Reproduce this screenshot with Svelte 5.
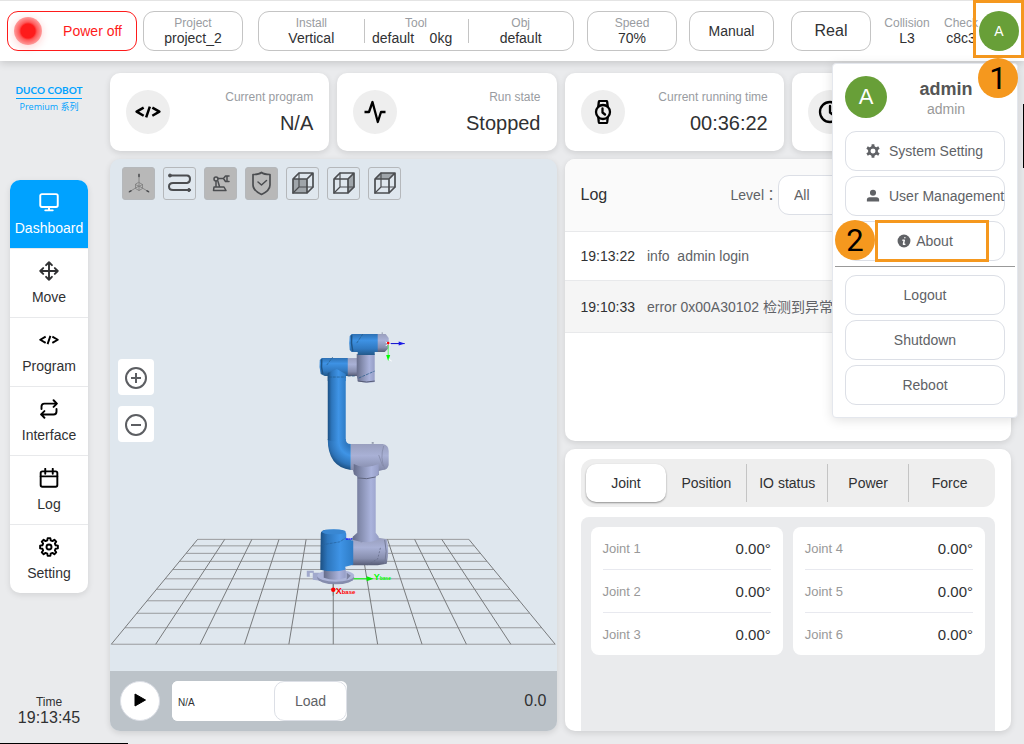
<script>
  const cards = [
    { icon: 'code', label: 'Current program', value: 'N/A' },
    { icon: 'pulse', label: 'Run state', value: 'Stopped' },
    { icon: 'watch', label: 'Current running time', value: '00:36:22' },
    { icon: 'clock', label: '', value: '' }
  ];
  const nav = [
    { icon: 'monitor', label: 'Dashboard' },
    { icon: 'move', label: 'Move' },
    { icon: 'code', label: 'Program' },
    { icon: 'repeat', label: 'Interface' },
    { icon: 'calendar', label: 'Log' },
    { icon: 'gear', label: 'Setting' }
  ];
  const tools = [
    { icon: 'axes', label: 'Axes', on: true },
    { icon: 'path', label: 'Path', on: false },
    { icon: 'arm', label: 'Model', on: true },
    { icon: 'shield', label: 'Safety', on: true },
    { icon: 'front', label: 'Front view', on: false },
    { icon: 'side', label: 'Side view', on: false },
    { icon: 'top', label: 'Top view', on: false }
  ];
  const tabs = ['Joint', 'Position', 'IO status', 'Power', 'Force'];
  const joints = [
    ['Joint 1', 'Joint 2', 'Joint 3'],
    ['Joint 4', 'Joint 5', 'Joint 6']
  ];
  let activeTab = $state('Joint');

  // Floor grid in perspective
  const far = { y: 539.5, l: 197.7, r: 469.3 };
  const near = { y: 644.5, l: 111.3, r: 555.7 };
  const rows = [539.5, 546, 553.5, 561.5, 569.7, 579, 589.5, 601, 613.5, 628, 644.5].map((y) => {
    const t = (y - far.y) / (near.y - far.y);
    return { y, l: far.l + (near.l - far.l) * t, r: far.r + (near.r - far.r) * t };
  });
  const cols = Array.from({ length: 11 }, (_, i) => ({
    a: far.l + ((far.r - far.l) * i) / 10,
    b: near.l + ((near.r - near.l) * i) / 10
  }));

  function gear(n, outer, inner) {
    const pts = [];
    const step = (Math.PI * 2) / n;
    for (let i = 0; i < n; i++) {
      for (const [f, r] of [[-0.32, inner], [-0.19, outer], [0.19, outer], [0.32, inner]]) {
        const a = i * step + f * step - Math.PI / 2;
        pts.push((12 + r * Math.cos(a)).toFixed(2) + ' ' + (12 + r * Math.sin(a)).toFixed(2));
      }
    }
    return 'M' + pts.join('L') + 'Z';
  }
</script>

{#snippet glyph(name, size)}
  <svg width={size} height={size} viewBox="0 0 24 24" fill="none" stroke="currentColor" stroke-width="2.300" stroke-linecap="round" stroke-linejoin="round" aria-hidden="true">
    {#if name === 'code'}
      <path d="M8 8L1.5 11.7L8 15.5M16 8l6.500 3.700L16 15.500M13.700 7L10.300 17" stroke-linecap="butt" />
    {:else if name === 'pulse'}
      <path d="M1.500 12H6L9.500 2L14.800 22L18 12h4.500" stroke-linecap="butt" />
    {:else if name === 'watch'}
      <circle cx="12" cy="12" r="7" /><path d="M7.300 6.500L7.800 2Q8 .8 9.200.8h5.600Q16 .8 16.200 2l.5 4.500M7.300 17.500L7.800 22Q8 23.200 9.200 23.200h5.600q1.200 0 1.400-1.200l.5-4.500M11.500 8.500V12.500L14 14.500" />
    {:else if name === 'clock'}
      <circle cx="12" cy="12" r="10" /><path d="M12 6v6.500l4 3" />
    {:else if name === 'monitor'}
      <rect x="1.500" y="2.500" width="21" height="15.500" rx="2" /><path d="M12 18v4M7.500 22h9" />
    {:else if name === 'move'}
      <path d="M12 1.500v21M1.500 12h21M8.500 5L12 1.500l3.500 3.500M8.500 19L12 22.500l3.500-3.500M5 8.500L1.500 12l3.500 3.500M19 8.500L22.500 12l-3.500 3.500" />
    {:else if name === 'repeat'}
      <path d="M17.500 1.500l4 4l-4 4M3 12V9q0-3.500 3.500-3.500h15M6.500 22.500l-4-4l4-4M21 12v3q0 3.500-3.500 3.500h-15" />
    {:else if name === 'calendar'}
      <rect x="2" y="4" width="20" height="18.500" rx="2" /><path d="M2 10h20M7.500 1v6M16.500 1v6" />
    {:else if name === 'gear'}
      <path d={gear(8, 10.8, 8.2)} /><circle cx="12" cy="12" r="3" />
    {:else if name === 'gearsolid'}
      <path fill-rule="evenodd" fill="currentColor" stroke="none" d={gear(6, 12, 8) + 'M12 7.500a4.500 4.500 0 1 0 .01 0z'} />
      <circle cx="12" cy="12" r="6.500" stroke-width="3.500" />
    {:else if name === 'user'}
      <g fill="currentColor" stroke="none"><circle cx="12" cy="6.500" r="5.200" /><path d="M1.500 21.500V18.500Q1.500 14 6 14h12q4.500 0 4.500 4.500v3z" /></g>
    {:else if name === 'info'}
      <circle cx="12" cy="12" r="11" fill="currentColor" stroke="none" /><path d="M13.500 6.200v.1M10 10.500h2.500L11 17.500h2.500" stroke="#fff" stroke-width="2.500" />
    {/if}
  </svg>
{/snippet}

{#snippet toolIcon(name)}
  <svg width="31" height="31" viewBox="0 0 31 31" fill="none" stroke="#4b4d50" stroke-width="2" stroke-linecap="round" stroke-linejoin="round" aria-hidden="true">
    {#if name === 'axes'}
      <g stroke="#7c7c7c" stroke-width=".8"><path d="M16 6v12L6 24M16 18l10 6" /><path d="M16 14.500l3.500 2v4L16 22.500l-3.500-2v-4zM12.500 16.500l3.500 2l3.500-2M16 18.500v4" /></g>
      <path d="M16 6.500v2M6.500 23.700l1.500-.9M25.500 23.700l-1.500-.9" stroke-width="1.500" />
    {:else if name === 'path'}
      <path d="M6 7.500h17q3 0 3 3.500t-3 4H9q-4 0-4 3.500t4 3.500h15" /><circle cx="6" cy="7.500" r="1.500" fill="#4b4d50" stroke-width="1" /><circle cx="25" cy="22" r="1.500" fill="#4b4d50" stroke-width="1" />
    {:else if name === 'arm'}
      <path d="M9 19h10l2 3.500H8.500zM11 18.500V13.500M14.500 18.500l-1.500-5M13 10.500h5" stroke-width="1.500" /><circle cx="11" cy="11" r="2" stroke-width="1.500" /><path d="M24 8h-3.500L18.500 10.500L20.500 13.500H24M22 8v5.500" stroke-width="1.500" />
    {:else if name === 'shield'}
      <path d="M15.500 4.500Q18 6.500 24 6.500V17q0 5.500-8.500 9.500Q7 22.500 7 17V6.500Q13 6.500 15.500 4.500z" stroke-width="1.700" /><path d="M12 14l3.500 3l5-4.500" stroke-width="1.500" />
    {:else}
      {#if name === 'front'}<path d="M6 11h14v14H6z" fill="#9fa5aa" stroke="none" />{/if}
      {#if name === 'side'}<path d="M20 11l6-6v14l-6 6z" fill="#9fa5aa" stroke="none" />{/if}
      {#if name === 'top'}<path d="M6 11l6-6h14l-6 6z" fill="#9fa5aa" stroke="none" />{/if}
      <path d="M6 11h14v14H6zM6 11l6-6h14l-6 6M26 5v14l-6 6" stroke-width="1.700" /><path d="M12 5v14h14M12 19l-6 6" stroke-width="1.200" />
    {/if}
  </svg>
{/snippet}

<div class="page">
  <header class="topbar">
    <button class="pill power"><span class="lamp"></span><span>Power off</span></button>
    <div class="pill project stat"><small>Project</small><b>project_2</b></div>
    <div class="pill group">
      <div class="stat"><small>Install</small><b>Vertical</b></div>
      <div class="stat"><small>Tool</small><b>default&nbsp;&nbsp;&nbsp;&nbsp;0kg&nbsp;&nbsp;</b></div>
      <div class="stat"><small>Obj</small><b>default</b></div>
    </div>
    <div class="pill speed stat"><small>Speed</small><b>70%</b></div>
    <button class="pill manual">Manual</button>
    <button class="pill real">Real</button>
    <div class="stat collision"><small>Collision</small><b>L3</b></div>
    <div class="stat check"><small>Check</small><b>c8c3</b></div>
    <button class="avatar" aria-label="Account">A</button>
    <span class="frame frame-one"></span>

    <div class="menu">
      <div class="who">
        <span class="avatar large">A</span>
        <div class="names"><strong>admin</strong><span>admin</span></div>
      </div>
      <button class="item lead">{@render glyph('gearsolid', 14)}System Setting</button>
      <button class="item lead">{@render glyph('user', 14)}User Management</button>
      <button class="item about">{@render glyph('info', 14)}About</button>
      <hr />
      <button class="item">Logout</button>
      <button class="item">Shutdown</button>
      <button class="item">Reboot</button>
      <span class="frame frame-two"></span>
      <span class="marker marker-one">1</span>
      <span class="marker marker-two">2</span>
    </div>
  </header>

  <div class="body">
    <aside>
      <div class="brand"><span class="brand-name">DUCO COBOT</span><span class="brand-sub">Premium 系列</span></div>
      <nav>
        {#each nav as item, i}
          <a href={'#' + item.label.toLowerCase()} class:current={i === 0} class:soft={item.icon === 'move'}>
            {@render glyph(item.icon, 20)}<span>{item.label}</span>
          </a>
        {/each}
      </nav>
      <div class="time"><span>Time</span><b>19:13:45</b></div>
    </aside>

    <main>
      {#each cards as card}
        <section class="card metric">
          <span class="disc">{@render glyph(card.icon, card.icon === 'code' ? 26 : 24)}</span>
          <div><span>{card.label}</span><b>{card.value}</b></div>
        </section>
      {/each}

      <section class="card viewer">
        <div class="scene">
          <svg class="canvas" viewBox="110 159 447 512" preserveAspectRatio="xMidYMid meet" role="img" aria-label="Robot model">
            <defs>
              <linearGradient id="blueV"><stop offset="0" stop-color="#1c4f82" /><stop offset=".22" stop-color="#2d76bd" /><stop offset=".6" stop-color="#3f94e6" /><stop offset="1" stop-color="#2e7cc6" /></linearGradient>
              <linearGradient id="blueH" x2="0" y2="1"><stop offset="0" stop-color="#2d71b4" /><stop offset=".3" stop-color="#3e92e4" /><stop offset=".7" stop-color="#3079c1" /><stop offset="1" stop-color="#235989" /></linearGradient>
              <linearGradient id="greyV"><stop offset="0" stop-color="#666d8b" /><stop offset=".3" stop-color="#858daf" /><stop offset=".7" stop-color="#aab3dc" /><stop offset="1" stop-color="#969ec6" /></linearGradient>
              <linearGradient id="greyH" x2="0" y2="1"><stop offset="0" stop-color="#999fbe" /><stop offset=".35" stop-color="#a9b1d6" /><stop offset=".75" stop-color="#878eae" /><stop offset="1" stop-color="#565c75" /></linearGradient>
              <radialGradient id="bend" gradientUnits="userSpaceOnUse" cx="354" cy="441" r="30"><stop offset=".25" stop-color="#3078c0" /><stop offset=".5" stop-color="#3f94e6" /><stop offset=".8" stop-color="#2d73b8" /><stop offset="1" stop-color="#194a79" /></radialGradient>
            </defs>

            <g stroke-width="1">
              {#each rows as r}<line x1={r.l} y1={r.y} x2={r.r} y2={r.y} stroke="#999b9d" />{/each}
              {#each cols as c}<line x1={c.a} y1={far.y} x2={c.b} y2={near.y} stroke="#77797b" />{/each}
            </g>

            <!-- base ring and clamp -->
            <path d="M307 571h7v2h6l1 8l-8-1v-3h-6z" fill="#a1a9cc" />
            <path d="M310 573h3v4h-3z" fill="#dfe7ee" />
            <ellipse cx="336" cy="578" rx="18.500" ry="6.500" fill="#858cad" />
            <ellipse cx="336" cy="576" rx="18.500" ry="6" fill="#adb5d9" />
            <path d="M324 568h22v10q-11 4-22 0z" fill="url(#greyV)" />
            <path d="M347 573l4 3l-4 4z" fill="#7b82a1" />
            <!-- lower joint -->
            <path d="M352 538h27l8 1.500q3 11 0 24.500l-9 1.500H352z" fill="url(#greyH)" />
            <path d="M385 540q3 11 0 24" stroke="#747b98" fill="none" />
            <path d="M321 534Q321 531 326 530h14q6 1 6.500 4v5l7 2v24l-8 2v3q-12 3-25 0z" fill="url(#blueV)" />
            <ellipse cx="334" cy="532" rx="12" ry="2.500" fill="#3987d2" />
            <path d="M322 545l18-3l6-4" stroke="#25619b" stroke-dasharray="3 1" fill="none" stroke-width=".7" />
            <path d="M368 565l10-6l3-12M361 542l16-3" stroke="#626984" stroke-dasharray="2 1.500" fill="none" stroke-width=".7" />
            <!-- forearm column -->
            <path d="M357.500 475h18.500v58l3 4v3q-13 5-26 0v-3l4.500-4z" fill="url(#greyV)" />
            <!-- shoulder -->
            <path d="M351 444h32q6 1 6 7v14q-1 5-6 5l-4 1v4q-12 5-24 0l-2-5h-2z" fill="url(#greyH)" />
            <path d="M354 464q11 6 25 0v10l-3 3q-9 3-18 0l-4-3z" fill="url(#greyV)" />
            <path d="M384 446q-4 12 1 23M379 455l4 11" stroke="#848aa8" fill="none" stroke-width=".8" />
            <path d="M358 478q9 2 18-1" stroke="#60667f" fill="none" />
            <path d="M328 439h18q0 5 5 5v26Q328 467 328 439z" fill="url(#bend)" />
            <path d="M328 374h18v66q-9 3-18 0z" fill="url(#blueV)" />
            <!-- elbow -->
            <path d="M347 358h13v18h-13z" fill="url(#greyH)" />
            <path d="M320 360l2-2h26v18h-23l-4-2q-2-7-1-14z" fill="url(#blueH)" />
            <path d="M328 373l9-4l9 5v7h-18z" fill="url(#blueV)" />
            <path d="M322 359q-1 8 1 15" stroke="#1e5486" fill="none" stroke-width="1.500" />
            <!-- wrist -->
            <path d="M357 354h18v28q-9 2-17-1l-1-6z" fill="url(#greyV)" />
            <path d="M358 381q9 2 17 0" stroke="#555b74" fill="none" />
            <path d="M377 334h9l3 4v10l-4 4h-8z" fill="url(#greyH)" />
            <path d="M350 336l2-2h26v18h-3v3h-17v-3h-6l-2-2q-1-7 0-14z" fill="url(#blueH)" />
            <path d="M352 335q-1 8 1 16" stroke="#1f5588" fill="none" stroke-width="1.500" />
            <path d="M327 365l6-8M357 343l6-9M359 378l16-7M348 376h8M329 377h17" stroke="#235987" stroke-dasharray="3 1" fill="none" stroke-width=".7" />
            <path d="M382 333h1M372 443h2" stroke="#596079" />

            <!-- coordinate frames -->
            <path d="M391 343.500h14" stroke="#0808cd" /><path d="M399 341.500l6 2l-6 2z" fill="#1818e8" />
            <path d="M388.500 345v11" stroke="#60f460" /><path d="M386.500 355h4l-2 6z" fill="#0f0" />
            <path d="M386 342l5 3M386 346l4-4M389 359l3 2" stroke="#fff" /><circle cx="388.500" cy="343" r="1.300" fill="#f00" />
            <path d="M354 579h14" stroke="#0f0" /><path d="M367 576.500l7 2.500l-7 2.500z" fill="#0e0" />
            <path d="M333.500 584v12" stroke="#777" /><circle cx="333.500" cy="590" r="2.200" fill="#f00" />
            <g font-family="Liberation Sans, sans-serif" font-weight="bold">
              <text x="374" y="580" font-size="9" fill="#0f0">Y<tspan font-size="5">base</tspan></text>
              <text x="336" y="594" font-size="9" fill="#f00">X<tspan font-size="6">base</tspan></text>
              <text x="346" y="540" font-size="4" fill="#00f">ase</text>
            </g>
          </svg>
          <div class="tools">
            {#each tools as tool}
              <button class:on={tool.on} aria-label={tool.label}>{@render toolIcon(tool.icon)}</button>
            {/each}
          </div>
          <div class="zoom">
            <button aria-label="Zoom in"><svg width="24" height="24" viewBox="0 0 24 24" fill="none" stroke="#5c5e62" stroke-width="2"><circle cx="12" cy="12" r="10" /><path d="M7 12h10M12 7v10" /></svg></button>
            <button aria-label="Zoom out"><svg width="24" height="24" viewBox="0 0 24 24" fill="none" stroke="#5c5e62" stroke-width="2"><circle cx="12" cy="12" r="10" /><path d="M7 12h10" /></svg></button>
          </div>
        </div>
        <footer>
          <button class="play" aria-label="Play"><svg width="14" height="14" viewBox="0 0 14 14"><path d="M2 1l10.500 6L2 13z" fill="#000" stroke="#000" stroke-linejoin="round" /></svg></button>
          <div class="loader"><input aria-label="Program file" value="N/A" readonly /><button>Load</button></div>
          <output>0.0</output>
        </footer>
      </section>

      <div class="side">
        <section class="card log">
          <div class="log-head">
            <h2>Log</h2>
            <label for="level">Level：</label>
            <select id="level"><option>All</option></select>
          </div>
          <div class="entry"><time>19:13:22</time><span>info&nbsp; admin login</span></div>
          <div class="entry alt"><time>19:10:33</time><span>error 0x00A30102 检测到异常</span></div>
        </section>

        <section class="card status">
          <div class="tabs" role="tablist">
            {#each tabs as tab}
              <button role="tab" aria-selected={activeTab === tab} class:active={activeTab === tab} onclick={() => (activeTab = tab)}>{tab}</button>
            {/each}
          </div>
          <div class="panel">
            {#each joints as column}
              <dl>
                {#each column as joint}<div><dt>{joint}</dt><dd>0.00°</dd></div>{/each}
              </dl>
            {/each}
          </div>
        </section>
      </div>
    </main>
  </div>
  <span class="edge edge-right"></span>
  <span class="edge edge-bottom"></span>
</div>

<style>
  :global(body) {
    background: #eaebed;
  }
  .page, .page * {
    box-sizing: border-box;
  }
  .page {
    position: relative;
    display: flex;
    flex-direction: column;
    min-height: 100vh;
    font-family: "Liberation Sans", "Noto Sans CJK SC", sans-serif;
    font-size: 14px;
    line-height: 16px;
    color: #303133;
    overflow: hidden;
  }
  button, input, select {
    font: inherit;
    color: inherit;
    margin: 0;
    padding: 0;
    background: #fff;
    border: 0;
    white-space: nowrap;
  }
  button {
    cursor: pointer;
  }
  b {
    font-weight: normal;
  }
  svg {
    flex: none;
    display: block;
  }

  .topbar {
    position: relative;
    z-index: 2;
    display: flex;
    align-items: center;
    height: 61px;
    background: #fff;
    border-top: 1px solid #e4e4e4;
    box-shadow: 0 2px 8px rgba(0, 0, 0, 0.16);
  }
  .pill {
    height: 40px;
    border: 1px solid #c4c4c4;
    border-radius: 11px;
  }
  .stat {
    display: flex;
    flex-direction: column;
    align-items: center;
    justify-content: center;
    white-space: nowrap;
  }
  .stat small {
    font-size: 12px;
    line-height: 14px;
    color: #999ca1;
  }
  .power {
    flex: 1 1 130px;
    margin-left: 7px;
    display: flex;
    align-items: center;
    justify-content: space-between;
    padding: 0 14px 0 6px;
    color: #fe1b1b;
    border-color: #fe1b1b;
  }
  .lamp {
    width: 28px;
    height: 28px;
    border-radius: 50%;
    background: radial-gradient(circle, #fe1b1b 0 7px, #fe5a5a 9px, #fe9c9c 14px);
    box-shadow: 0 2px 8px rgba(254, 27, 27, 0.2);
  }
  .project { flex: 1 1 100px; margin-left: 6px; }
  .group {
    flex: 1 1 316px;
    margin-left: 15px;
    display: grid;
    grid-template-columns: repeat(3, 1fr);
    align-items: center;
  }
  .group .stat {
    position: relative;
  }
  .group .stat + .stat::before {
    content: "";
    position: absolute;
    left: 0;
    top: 3px;
    height: 24px;
    border-left: 1px solid #c4c4c4;
  }
  .speed { flex: 1 1 90px; margin-left: 13px; }
  .manual { flex: 1 1 85px; margin-left: 12px; }
  .real { flex: 1 1 80px; margin-left: 17px; font-size: 16px; }
  .collision { flex: 1 1 46px; margin-left: 13px; }
  .check { flex: 1 1 34px; margin-left: 14px; }
  .avatar {
    flex: none;
    width: 40px;
    height: 40px;
    margin: 0 5px 0 1px;
    border-radius: 50%;
    background: #689f38;
    color: #fff;
  }
  .frame {
    position: absolute;
    border: 3px solid #f5981e;
    pointer-events: none;
  }
  .frame-one { top: -1px; right: 0; width: 51px; height: 58px; }
  .frame-two { top: 156px; left: 42px; width: 114px; height: 42px; }
  .marker {
    position: absolute;
    width: 40px;
    height: 40px;
    border-radius: 50%;
    background: #f5981e;
    color: #000;
    font: 31px/42px Roboto, sans-serif;
    text-align: center;
  }
  .marker-one { top: -6px; right: -1px; }
  .marker-two { top: 156px; left: 2px; }

  .menu {
    position: absolute;
    top: 62px;
    right: 6px;
    width: 186px;
    padding: 12px;
    display: flex;
    flex-direction: column;
    gap: 5px;
    background: #fff;
    border: 1px solid #e4e7ed;
    border-radius: 4px;
    box-shadow: 0 2px 12px rgba(0, 0, 0, 0.12);
    color: #606266;
  }
  .who {
    display: flex;
    align-items: center;
    margin-bottom: 8px;
  }
  .avatar.large {
    width: 42px;
    height: 42px;
    margin: 0;
    font-size: 22px;
    line-height: 42px;
    text-align: center;
  }
  .names {
    flex: 1;
    display: flex;
    flex-direction: column;
    align-items: center;
    padding-top: 2px;
    color: #999;
  }
  .names span {
    line-height: 18px;
  }
  .names strong {
    font-size: 18px;
    line-height: 22px;
    color: #555;
  }
  .item {
    display: flex;
    align-items: center;
    justify-content: center;
    height: 40px;
    border: 1px solid #dcdfe6;
    border-radius: 11px;
  }
  .lead {
    justify-content: flex-start;
    gap: 9px;
    padding-left: 20px;
  }
  .about {
    gap: 5px;
  }
  hr {
    width: auto;
    margin: 0 -10px 3px;
    border: 0;
    border-top: 1px solid #999;
  }

  .body {
    flex: 1;
    display: flex;
  }
  aside {
    width: 110px;
    padding: 23px 22px 18px 10px;
    display: flex;
    flex-direction: column;
  }
  .brand {
    display: flex;
    flex-direction: column;
    align-items: center;
    color: #00a2ff;
    white-space: nowrap;
    height: 96px;
  }
  .brand-name {
    padding-bottom: 2px;
    font: bold 10px/12px Lato, sans-serif;
    border-bottom: 1px solid #00a2ff;
  }
  .brand-sub {
    margin-top: 2px;
    font: 9px/12px "Open Sans", "Noto Sans CJK SC", sans-serif;
  }
  nav {
    background: #fff;
    border-radius: 10px;
    overflow: hidden;
    box-shadow: 0 2px 6px rgba(0, 0, 0, 0.1);
  }
  nav a {
    display: flex;
    flex-direction: column;
    align-items: center;
    gap: 8px;
    height: 69px;
    padding-top: 12px;
    border-bottom: 1px solid #e8e9eb;
    color: #000;
    text-decoration: none;
  }
  nav a:last-child {
    height: 68px;
    border: 0;
  }
  nav a.soft {
    color: #303133;
  }
  nav span {
    color: #303133;
  }
  nav a.current, nav a.current span {
    color: #fff;
  }
  nav a.current {
    background: #00a2ff;
  }
  .time {
    margin-top: auto;
    display: flex;
    flex-direction: column;
    align-items: center;
    font-size: 12px;
  }
  .time b {
    font-size: 16px;
  }

  main {
    flex: 1;
    min-width: 0;
    display: grid;
    grid-template-columns: repeat(4, minmax(0, 1fr));
    grid-template-rows: 78px 1fr;
    gap: 8px;
    padding: 12px 13px 13px 0;
  }
  .card {
    background: #fff;
    border-radius: 10px;
    box-shadow: 0 2px 6px rgba(0, 0, 0, 0.12);
  }
  .metric {
    display: flex;
    align-items: center;
    justify-content: space-between;
    padding: 0 16px;
  }
  .disc {
    display: grid;
    place-items: center;
    width: 44px;
    height: 44px;
    border-radius: 50%;
    background: #eee;
    color: #000;
  }
  .metric div {
    display: flex;
    flex-direction: column;
    gap: 6px;
    text-align: right;
    font-size: 12px;
    color: #999ca1;
  }
  .metric b {
    font-size: 20px;
    line-height: 24px;
    color: #303133;
  }

  .viewer {
    grid-column: span 2;
    display: flex;
    flex-direction: column;
    overflow: hidden;
    background: #dfe7ee;
  }
  .scene {
    position: relative;
    flex: 1;
    min-height: 512px;
  }
  .canvas {
    position: absolute;
    inset: 0;
    width: 100%;
    height: 100%;
  }
  .tools {
    position: absolute;
    top: 8px;
    left: 12px;
    display: flex;
    gap: 8px;
  }
  .tools button {
    width: 33px;
    height: 33px;
    border: 1px solid #b5b8bb;
    border-radius: 3px;
    background: transparent;
  }
  .tools button.on {
    background: #b8b8b8;
  }
  .zoom {
    position: absolute;
    top: 200px;
    left: 8px;
    display: grid;
    gap: 11px;
  }
  .zoom button {
    display: grid;
    place-items: center;
    width: 36px;
    height: 36px;
    padding-top: 2px;
    border-radius: 4px;
  }
  footer {
    display: flex;
    align-items: center;
    gap: 12px;
    height: 60px;
    padding: 0 10px;
    background: #bcc3c9;
  }
  .play {
    display: grid;
    place-items: center;
    width: 40px;
    height: 40px;
    padding-bottom: 2px;
    border: 1px solid #dcdfe6;
    border-radius: 50%;
  }
  .loader {
    display: flex;
    width: 175px;
    height: 40px;
    background: #fff;
    border-radius: 6px;
  }
  .loader input {
    flex: 1;
    min-width: 0;
    padding: 4px 6px 0;
    border-radius: 6px;
    font-size: 10px;
  }
  .loader button {
    width: 73px;
    border: 1px solid #dcdfe6;
    border-radius: 10px;
    color: #606266;
  }
  output {
    margin-left: auto;
    font-size: 16px;
  }

  .side {
    grid-column: span 2;
    display: grid;
    grid-template-rows: 1fr 1fr;
    gap: 8px;
  }
  .log, .status {
    overflow: hidden;
  }
  .log-head {
    display: flex;
    align-items: center;
    height: 73px;
    padding: 0 16px;
    background: #fafafa;
    border-bottom: 1px solid #e8e9eb;
  }
  h2 {
    flex: 1;
    margin: 0;
    font-size: 16px;
    font-weight: normal;
  }
  label {
    color: #606266;
    font-family: "Liberation Sans", "Noto Sans CJK TC", sans-serif;
  }
  select {
    appearance: none;
    flex: 0 0 217px;
    height: 40px;
    padding: 0 15px;
    border: 1px solid #dcdfe6;
    border-radius: 11px;
    color: #606266;
  }
  .entry {
    display: flex;
    align-items: center;
    gap: 12px;
    height: 49px;
    padding: 0 16px;
    border-bottom: 1px solid #e8e9eb;
    white-space: nowrap;
  }
  .entry.alt {
    height: 52px;
    background: #f5f5f5;
  }
  .entry span {
    color: #606266;
  }

  .status {
    display: flex;
    flex-direction: column;
    gap: 10px;
    padding: 10px 16px 0;
  }
  .tabs {
    display: grid;
    grid-template-columns: repeat(5, 1fr);
    height: 48px;
    padding: 5px;
    border-radius: 12px;
    background: #eee;
  }
  .tabs button {
    background: transparent;
    border-right: 1px solid #c4c4c4;
  }
  .tabs button:last-child {
    border: 0;
  }
  .tabs button.active {
    background: #fff;
    border: 0;
    border-radius: 10px;
    box-shadow: 0 1px 2px rgba(0, 0, 0, 0.4);
  }
  .panel {
    flex: 1;
    display: grid;
    grid-template-columns: 1fr 1fr;
    align-items: start;
    gap: 10px;
    padding: 10px;
    border-radius: 8px 8px 0 0;
    background: #eaebed;
  }
  dl {
    margin: 0;
    padding: 0 12px;
    background: #fff;
    border-radius: 8px;
  }
  dl div {
    display: flex;
    align-items: center;
    justify-content: space-between;
    height: 43px;
    padding-top: 2px;
    border-bottom: 1px solid #e8e9ef;
  }
  dl div:last-child {
    height: 42px;
    border: 0;
  }
  dt {
    font-size: 13px;
    color: #999;
  }
  dd {
    margin: 0;
    font-size: 15px;
  }
  .edge {
    position: absolute;
    background: #000;
  }
  .edge-right { right: 0; top: 104px; width: 1px; height: 64px; }
  .edge-bottom { left: 0; bottom: 0; width: 128px; height: 1px; }
</style>
